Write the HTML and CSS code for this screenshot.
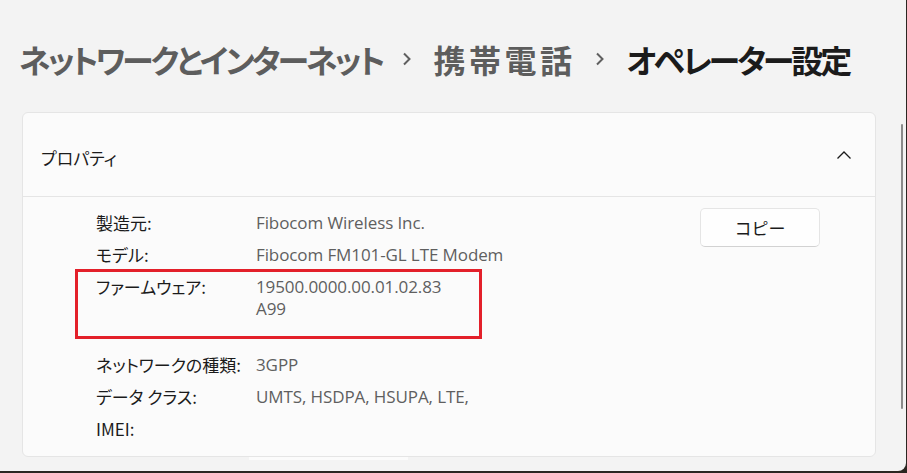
FILE: index.html
```html
<!DOCTYPE html>
<html lang="ja">
<head>
    <meta charset="UTF-8">
    <title>オペレーター設定</title>
    <link rel="stylesheet" href="styles.css">
</head>
<body>
    <div class="window">
        <h1 class="breadcrumb">
            <span class="crumb kana">ネットワークとインターネット</span>
            <svg class="sep" width="10" height="14" viewBox="0 0 10 14"><path d="M2 1.5 L7.5 7 L2 12.5" fill="none" stroke="#5f5f5f" stroke-width="2"/></svg>
            <span class="crumb kanji">携帯電話</span>
            <svg class="sep" width="10" height="14" viewBox="0 0 10 14"><path d="M2 1.5 L7.5 7 L2 12.5" fill="none" stroke="#5f5f5f" stroke-width="2"/></svg>
            <span class="crumb current">オペレーター設定</span>
        </h1>

        <section class="card">
            <div class="card-head">
                <span>プロパティ</span>
                <svg width="16" height="10" viewBox="0 0 16 10"><path d="M1.5 8.5 L8 2 L14.5 8.5" fill="none" stroke="#1b1b1b" stroke-width="1.3"/></svg>
            </div>
            <div class="card-body">
                <div class="props">
                    <div class="row"><span class="label">製造元:</span><span class="value">Fibocom Wireless Inc.</span></div>
                    <div class="row"><span class="label">モデル:</span><span class="value">Fibocom FM101-GL LTE Modem</span></div>
                    <div class="row tall marked"><span class="label">ファームウェア:</span><span class="value">19500.0000.00.01.02.83<br>A99</span></div>
                    <div class="row"><span class="label">ネットワークの種類:</span><span class="value">3GPP</span></div>
                    <div class="row"><span class="label">データ クラス:</span><span class="value">UMTS, HSDPA, HSUPA, LTE,</span></div>
                    <div class="row"><span class="label">IMEI:</span><span class="value"></span></div>
                </div>
                <button class="copy">コピー</button>
            </div>
        </section>
        <div class="tail"></div>

        <div class="scrollbar"></div>
    </div>
</body>
</html>
```

FILE: styles.css
```css
/* Settings window */
body {
    margin: 0;
    background: #2b2621;
    font-family: "Open Sans", "Noto Sans CJK JP", sans-serif;
    color: #1b1b1b;
}

.window {
    position: relative;
    width: 906px;
    height: 471px;
    background: #f3f3f3;
    border-bottom-right-radius: 8px;
    overflow: hidden;
}

.breadcrumb {
    display: flex;
    align-items: center;
    margin: 0;
    padding: 45px 0 0 19px;
    height: 73px;
    box-sizing: border-box;
    white-space: nowrap;
    font-family: "Noto Sans CJK JP", sans-serif;
    font-feature-settings: "palt";
    font-size: 32px;
    font-weight: 700;
    line-height: 30px;
    color: #5d5d5d;
}

.crumb {
    flex-shrink: 0;
}

.crumb.kana {
    letter-spacing: -3px;
}

.crumb.kanji {
    letter-spacing: 3.5px;
}

.crumb.current {
    color: #1b1b1b;
    letter-spacing: -3px;
}

.sep {
    flex-shrink: 0;
    margin: 0 21px 0 20px;
}

.card {
    margin: 39px 0 0 22px;
    width: 854px;
    height: 345px;
    box-sizing: border-box;
    background: #fbfbfb;
    border: 1px solid #e5e5e5;
    border-radius: 6px;
}

.card-head {
    display: flex;
    justify-content: space-between;
    align-items: center;
    height: 83px;
    padding: 0 23px 0 18px;
    border-bottom: 1px solid #e5e5e5;
    font-family: "Noto Sans CJK JP", sans-serif;
    font-feature-settings: "palt";
    font-size: 17px;
}

.card-head span {
    padding-top: 5px;
}

.card-body {
    display: flex;
    justify-content: space-between;
    align-items: flex-start;
    padding: 10px 55px 0 73px;
}

.props {
    display: flex;
    flex-direction: column;
}

.row {
    display: flex;
    padding: 5px 0;
    font-size: 17px;
    line-height: 22px;
}

.row.tall {
    padding-bottom: 29px;
}

.marked {
    position: relative;
}

.marked::after {
    content: "";
    position: absolute;
    left: -21px;
    top: -2px;
    width: 401px;
    height: 64px;
    border: 3px solid #e3202a;
}

.label {
    width: 160px;
    font-family: "Noto Sans CJK JP", sans-serif;
    font-feature-settings: "palt";
    color: #1b1b1b;
}

.value {
    color: #5f5f5f;
    letter-spacing: -0.1px;
}

.copy {
    margin-top: 1px;
    width: 120px;
    height: 39px;
    background: #fefefe;
    border: 1px solid #e5e5e5;
    border-bottom-color: #d2d2d2;
    border-radius: 5px;
    font-family: "Noto Sans CJK JP", sans-serif;
    font-size: 17px;
    color: #1b1b1b;
}

.tail {
    margin-left: 249px;
    width: 159px;
    height: 3px;
    background: #fbfbfb;
}

.scrollbar {
    position: absolute;
    right: 3px;
    top: 124px;
    width: 2px;
    height: 285px;
    background: #8a8a8a;
    border-radius: 1px;
}
```
